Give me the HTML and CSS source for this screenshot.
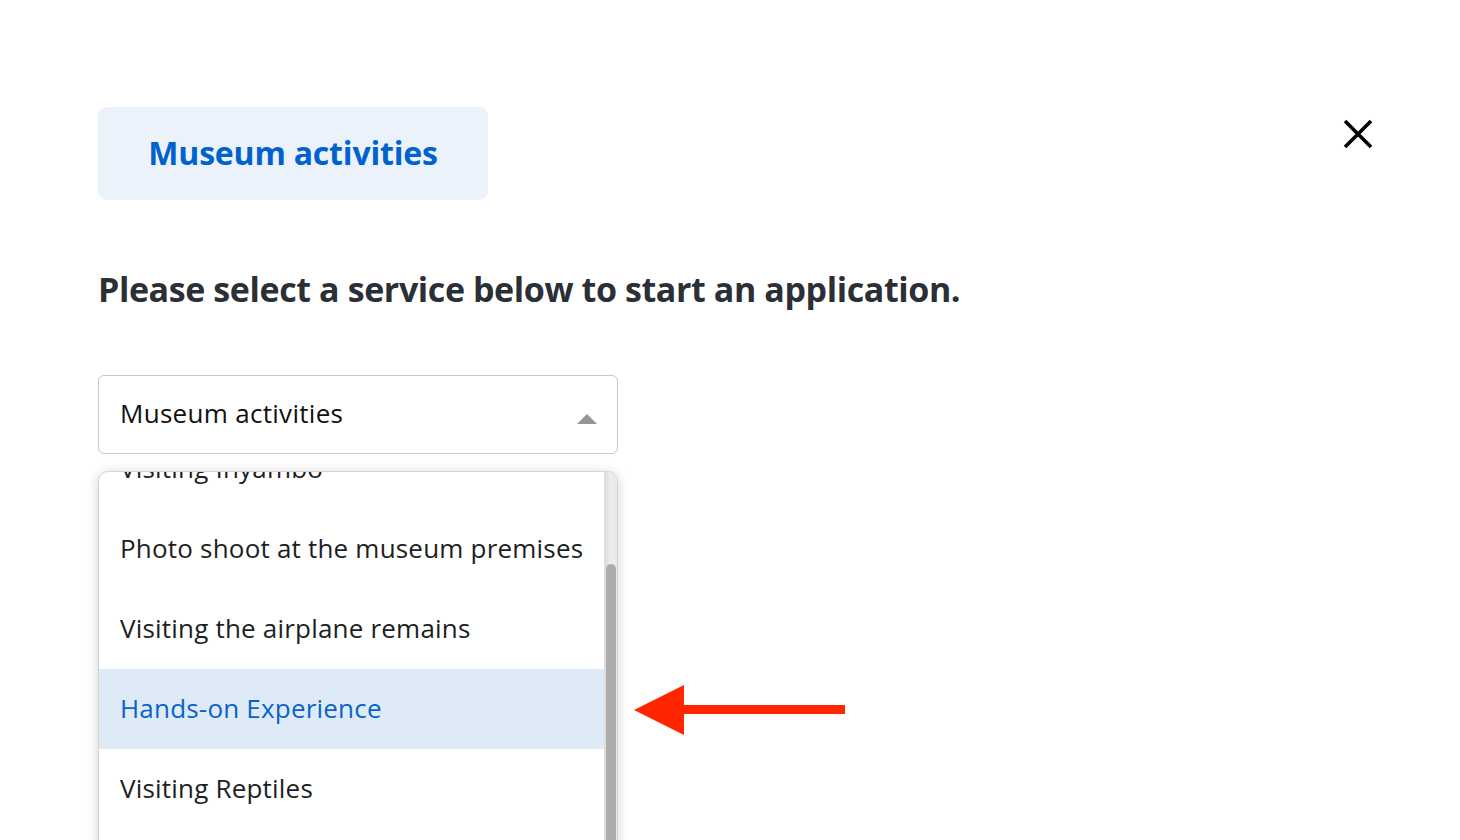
FILE: index.html
```html
<!DOCTYPE html>
<html lang="en">
<head>
<meta charset="utf-8">
<title>Museum activities</title>
<link rel="stylesheet" href="styles.css">
</head>
<body>
<div class="page">
  <div class="top">
    <div class="badge">Museum activities</div>
    <button class="close" aria-label="Close">
      <svg width="32" height="32" viewBox="0 0 32 32"><path d="M3 3 L29 29 M29 3 L3 29" stroke="#000" stroke-width="3.6" fill="none"/></svg>
    </button>
  </div>
  <h1 class="heading">Please select a service below to start an application.</h1>
  <div class="select">
    <span class="select-value">Museum activities</span>
    <span class="caret"></span>
  </div>
  <div class="dropdown-row">
    <div class="dropdown">
      <div class="list">
        <div class="item first">Visiting Inyambo</div>
        <div class="item">Photo shoot at the museum premises</div>
        <div class="item">Visiting the airplane remains</div>
        <div class="item active">Hands-on Experience</div>
        <div class="item">Visiting Reptiles</div>
      </div>
      <div class="track"><div class="thumb"></div></div>
    </div>
    <svg class="arrow" width="214" height="52" viewBox="0 0 214 52"><polygon points="0,26 50,1 50,51" fill="#ff2600"/><rect x="48" y="21" width="163" height="9" fill="#ff2600"/></svg>
  </div>
</div>
</body>
</html>
```
FILE: styles.css
```css
html, body {
  margin: 0;
  padding: 0;
  background: #fff;
  height: 100%;
  overflow: hidden;
}
body {
  font-family: "Open Sans", "Noto Sans", sans-serif;
  color: #1f2328;
}
.page {
  padding: 107px 0 0 98px;
}
.top {
  display: flex;
  align-items: flex-start;
  justify-content: space-between;
  width: 1276px;
}
.badge {
  width: 390px;
  height: 93px;
  box-sizing: border-box;
  padding-bottom: 2px;
  background: #ebf2fc;
  border-radius: 9px;
  color: #0062cc;
  font-weight: 700;
  font-size: 32px;
  display: flex;
  align-items: center;
  justify-content: center;
  letter-spacing: -0.2px;
}
.close {
  border: 0;
  background: none;
  padding: 0;
  margin-top: 11px;
  width: 32px;
  height: 32px;
}
.close svg { display: block; }
.heading {
  margin: 69px 0 0;
  font-size: 34px;
  font-weight: 700;
  color: #2b2f36;
  line-height: 40px;
  letter-spacing: -0.4px;
}
.select {
  margin-top: 66px;
  width: 520px;
  height: 79px;
  box-sizing: border-box;
  border: 1.5px solid #c8c8c8;
  border-radius: 6px;
  display: flex;
  align-items: center;
  justify-content: space-between;
  padding: 0 20px 0 21px;
  font-size: 26px;
  letter-spacing: 0.3px;
  color: #111;
}
.select-value { margin-top: -3px; }
.caret {
  width: 0;
  height: 0;
  border-left: 10px solid transparent;
  border-right: 10px solid transparent;
  border-bottom: 10px solid #959595;
  margin-top: 8px;
}
.dropdown-row {
  display: flex;
  align-items: flex-start;
  margin-top: 17px;
}
.dropdown {
  width: 520px;
  height: 400px;
  box-sizing: border-box;
  border: 1px solid #d4d4d4;
  border-radius: 10px 10px 0 0;
  box-shadow: 0 2px 12px rgba(0,0,0,0.18);
  overflow: hidden;
  display: flex;
  background: #fff;
}
.list {
  flex: 1;
  margin-top: -43px;
}
.item {
  height: 80px;
  display: flex;
  align-items: center;
  padding-left: 21px;
  font-size: 26px;
  letter-spacing: 0.2px;
  color: #1c1f24;
  padding-bottom: 2px;
  box-sizing: border-box;
}
.item.active {
  background: #deebf7;
  color: #0a63c9;
}
.track {
  width: 12px;
  background: linear-gradient(to right, #dcdcdc, #ececec 40%, #e8e8e8);
  border-left: 1px solid #e0e0e0;
  display: flex;
  flex-direction: column;
}
.thumb {
  margin: 92px 1px 0;
  flex: 1;
  background: #acacac;
  border-radius: 6px 6px 0 0;
}
.arrow {
  margin: 213px 0 0 16px;
  display: block;
}
```
